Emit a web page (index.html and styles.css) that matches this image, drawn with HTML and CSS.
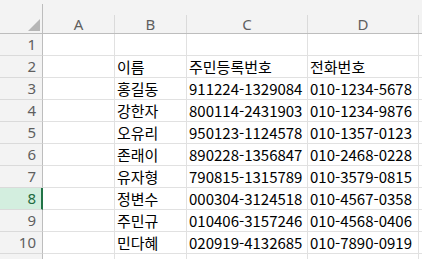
FILE: index.html
```html
<!DOCTYPE html>
<html lang="ko">
<head>
  <meta charset="UTF-8">
  <title>Sheet1</title>
  <link rel="stylesheet" href="styles.css">
</head>
<body>
  <div class="sheet">
    <!-- column headers -->
    <div class="row head-row">
      <div class="hcell corner"><div class="hinner"><span class="select-all"></span></div></div>
      <div class="hcell col-a"><div class="hinner">A</div></div>
      <div class="hcell col-b"><div class="hinner">B</div></div>
      <div class="hcell col-c"><div class="hinner">C</div></div>
      <div class="hcell col-d"><div class="hinner">D</div></div>
      <div class="hcell col-e"><div class="hinner"></div></div>
    </div>
    <div class="row">
      <div class="rnum">1</div>
      <div class="cell col-a"></div><div class="cell col-b"></div><div class="cell col-c"></div><div class="cell col-d"></div><div class="cell col-e"></div>
    </div>
    <div class="row">
      <div class="rnum">2</div>
      <div class="cell col-a"></div><div class="cell col-b">이름</div><div class="cell col-c">주민등록번호</div><div class="cell col-d">전화번호</div><div class="cell col-e"></div>
    </div>
    <div class="row">
      <div class="rnum">3</div>
      <div class="cell col-a"></div><div class="cell col-b">홍길동</div><div class="cell col-c">911224-1329084</div><div class="cell col-d">010-1234-5678</div><div class="cell col-e"></div>
    </div>
    <div class="row">
      <div class="rnum">4</div>
      <div class="cell col-a"></div><div class="cell col-b">강한자</div><div class="cell col-c">800114-2431903</div><div class="cell col-d">010-1234-9876</div><div class="cell col-e"></div>
    </div>
    <div class="row">
      <div class="rnum">5</div>
      <div class="cell col-a"></div><div class="cell col-b">오유리</div><div class="cell col-c">950123-1124578</div><div class="cell col-d">010-1357-0123</div><div class="cell col-e"></div>
    </div>
    <div class="row">
      <div class="rnum">6</div>
      <div class="cell col-a"></div><div class="cell col-b">존래이</div><div class="cell col-c">890228-1356847</div><div class="cell col-d">010-2468-0228</div><div class="cell col-e"></div>
    </div>
    <div class="row">
      <div class="rnum">7</div>
      <div class="cell col-a"></div><div class="cell col-b">유자형</div><div class="cell col-c">790815-1315789</div><div class="cell col-d">010-3579-0815</div><div class="cell col-e"></div>
    </div>
    <div class="row">
      <div class="rnum active">8</div>
      <div class="cell col-a"></div><div class="cell col-b">정변수</div><div class="cell col-c">000304-3124518</div><div class="cell col-d">010-4567-0358</div><div class="cell col-e"></div>
    </div>
    <div class="row">
      <div class="rnum">9</div>
      <div class="cell col-a"></div><div class="cell col-b">주민규</div><div class="cell col-c">010406-3157246</div><div class="cell col-d">010-4568-0406</div><div class="cell col-e"></div>
    </div>
    <div class="row">
      <div class="rnum">10</div>
      <div class="cell col-a"></div><div class="cell col-b">민다혜</div><div class="cell col-c">020919-4132685</div><div class="cell col-d">010-7890-0919</div><div class="cell col-e"></div>
    </div>
    <div class="row">
      <div class="rnum"></div>
      <div class="cell col-a"></div><div class="cell col-b"></div><div class="cell col-c"></div><div class="cell col-d"></div><div class="cell col-e"></div>
    </div>
  </div>
</body>
</html>
```

FILE: styles.css
```css
* {
  margin: 0;
  padding: 0;
  box-sizing: border-box;
}
body {
  background: #ffffff;
  overflow: hidden;
  font-family: "Noto Sans", "Noto Sans CJK KR", sans-serif;
}
.sheet {
  width: 422px;
  height: 259px;
  overflow: hidden;
}
.row {
  display: flex;
  height: 22px;
}
.head-row {
  height: 34px;
  background: #f3f3f3;
  border-bottom: 1px solid #bdbdbd;
}

/* column widths (include right gridline) */
.corner, .rnum { width: 43px; flex: none; }
.col-a { width: 72px; flex: none; }
.col-b { width: 72px; flex: none; }
.col-c { width: 121px; flex: none; }
.col-d { width: 111px; flex: none; }
.col-e { flex: 1; }

/* header cells */
.hcell {
  height: 33px;
  display: flex;
  flex-direction: column;
}
.hinner {
  margin-top: 15px;
  flex: 1;
  border-right: 1px solid #dadada;
  color: #5f5f5f;
  font-size: 15px;
  line-height: 18px;
  text-align: center;
}
.corner .hinner {
  margin-top: 4px;
  border-right: 1px solid #bdbdbd;
  position: relative;
}
.col-e .hinner {
  border-right: none;
}
.select-all {
  position: absolute;
  right: 2px;
  bottom: 2px;
  width: 0;
  height: 0;
  border-left: 12px solid transparent;
  border-bottom: 12px solid #b6b6b6;
}

/* row numbers */
.rnum {
  background: #f3f3f3;
  border-right: 1px solid #bdbdbd;
  border-bottom: 1px solid #dadada;
  color: #5f5f5f;
  font-size: 15px;
  line-height: 21px;
  text-align: right;
  padding-right: 6px;
}
.rnum.active {
  background: #d3eedf;
  color: #1e6b41;
  border-right: 2px solid #217346;
  padding-right: 5px;
}

/* data cells */
.cell {
  border-right: 1px solid #e1e1e1;
  border-bottom: 1px solid #e1e1e1;
  font-family: "Noto Sans CJK KR", "Noto Sans", sans-serif;
  font-size: 15px;
  line-height: 21px;
  padding-left: 2px;
  color: #000000;
  white-space: nowrap;
  overflow: hidden;
}
.col-e.cell {
  border-right: none;
}
```
